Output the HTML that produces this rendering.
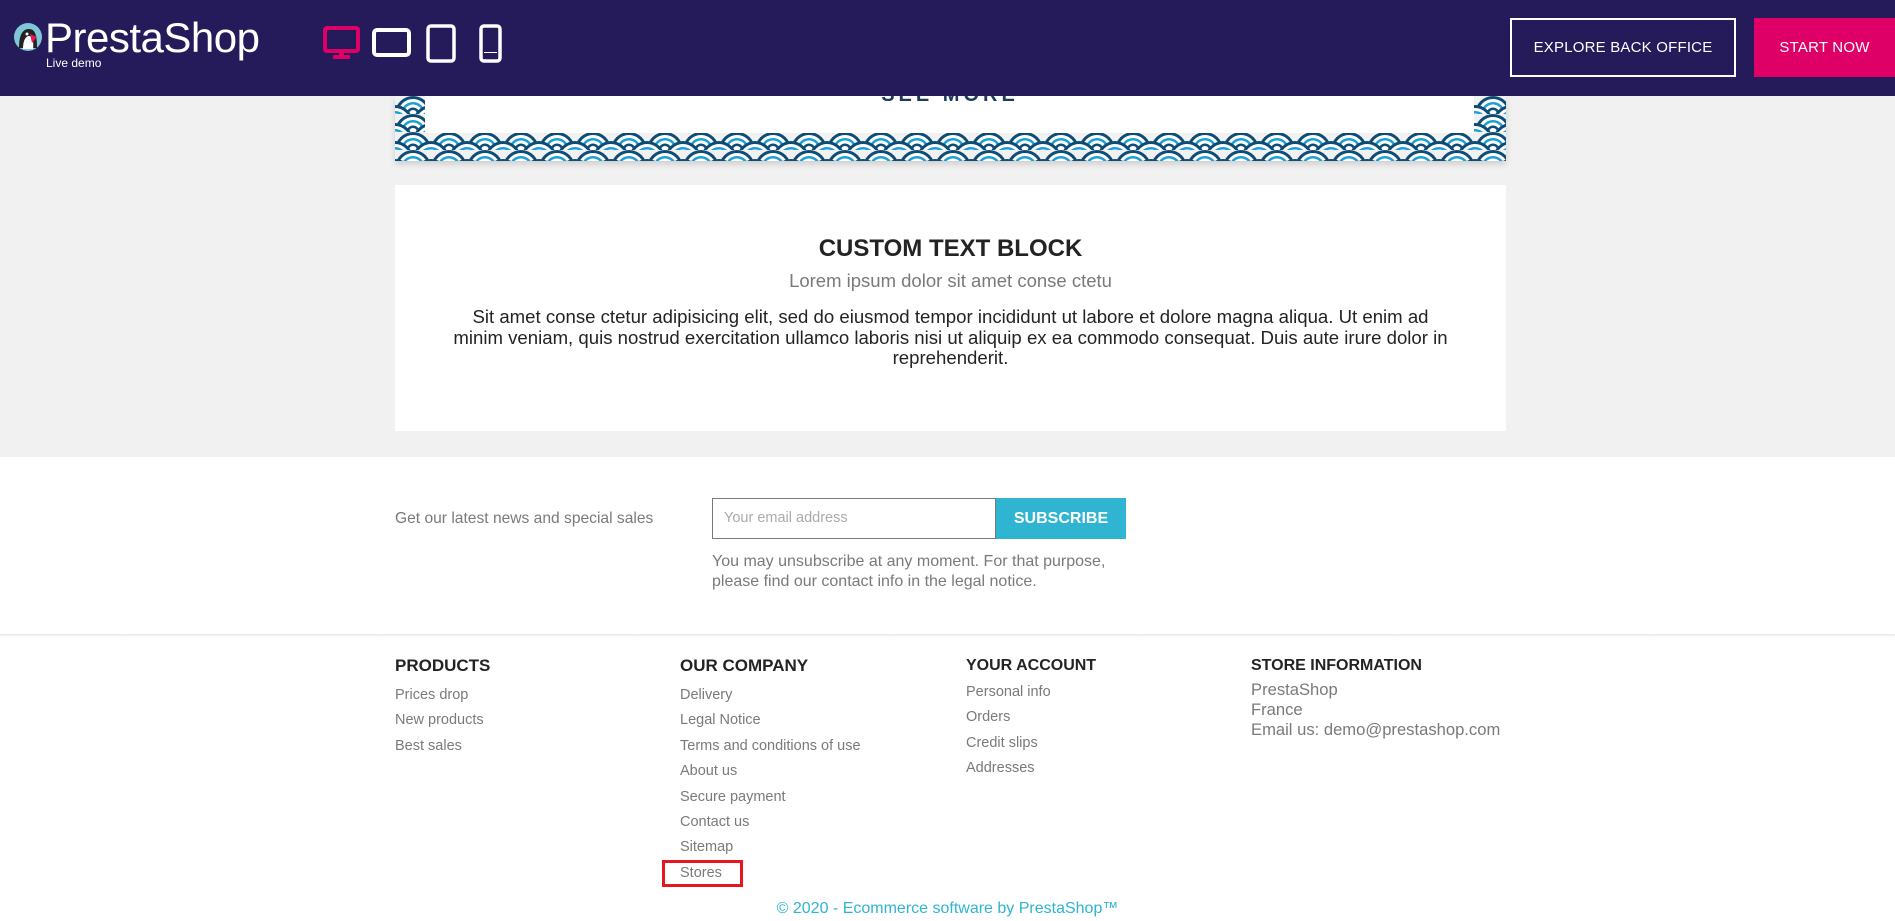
<!DOCTYPE html>
<html><head><meta charset="utf-8">
<style>
*{margin:0;padding:0;box-sizing:border-box}
body{width:1895px;height:921px;overflow:hidden;background:#fff;font-family:"Liberation Sans",sans-serif;position:relative}
.abs{position:absolute}
#grey{left:0;top:0;width:1895px;height:457px;background:#f1f1f1}
#hdr{left:0;top:0;width:1895px;height:96px;background:#251b5b;z-index:5}
.btn{position:absolute;top:18px;height:59px;color:#fff;font-size:15px;display:flex;align-items:center;justify-content:center;letter-spacing:.2px}
#hide{left:0;top:96px;width:86px;height:32px;background:#a39fb8;color:#fff;font-size:13px;display:flex;align-items:center;padding-left:16px;z-index:4}
.col{position:absolute;top:654px}
.col h4{font-size:17px;font-weight:bold;color:#232323;height:24px;line-height:24px}
.col a{display:block;font-size:14.5px;color:#7a7a7a;height:25.4px;line-height:25.4px;text-decoration:none}
</style></head><body>
<div id="grey" class="abs"></div>
<div id="hdr" class="abs">
  <svg class="abs" style="left:13px;top:22px" width="30" height="30" viewBox="0 0 30 30">
    <circle cx="15" cy="15" r="14" fill="#7fc6d8"/>
    <path d="M6 26 C6 12 10 7 16 7 C22 7 24 13 24 26 Z" fill="#222"/>
    <path d="M10 27 C10 18 13 14 16 14 C19 14 21 18 20 27 Z" fill="#fff"/>
    <path d="M17 12 L24 15 L19 21 Z" fill="#e2185a"/>
    <circle cx="14" cy="12" r="1.5" fill="#fff"/>
  </svg>
  <div class="abs" style="left:45px;top:16px;color:#fff;font-size:42px;line-height:44px;letter-spacing:-0.5px">PrestaShop</div>
  <div class="abs" style="left:46px;top:56px;color:#fff;font-size:12px">Live demo</div>
  <svg class="abs" style="left:322px;top:26px" width="40" height="36" viewBox="0 0 40 36">
    <rect x="3" y="2" width="33" height="23" rx="2" fill="none" stroke="#df0067" stroke-width="4"/>
    <rect x="17" y="25" width="5" height="5" fill="#df0067"/><rect x="11" y="29" width="17" height="4" rx="1" fill="#df0067"/>
  </svg>
  <svg class="abs" style="left:372px;top:28px" width="40" height="30" viewBox="0 0 40 30">
    <rect x="2" y="2" width="35" height="25" rx="3" fill="none" stroke="#fff" stroke-width="4"/>
  </svg>
  <svg class="abs" style="left:426px;top:24px" width="31" height="39" viewBox="0 0 31 39">
    <rect x="2" y="2" width="26" height="35" rx="3" fill="none" stroke="#fff" stroke-width="3.5"/>
  </svg>
  <svg class="abs" style="left:479px;top:24px" width="24" height="39" viewBox="0 0 24 39">
    <rect x="2" y="2" width="19" height="35" rx="3" fill="none" stroke="#fff" stroke-width="3.5"/>
    <circle cx="11.5" cy="31" r="2" fill="#251b5b"/><rect x="5" y="28" width="13" height="1" fill="#fff"/>
  </svg>
  <div class="btn" style="left:1510px;width:226px;border:2px solid #fff">EXPLORE BACK OFFICE</div>
  <div class="btn" style="left:1754px;width:141px;background:#df0067">START NOW</div>
</div>
<div id="hide"><span style="font-size:11px;margin-right:10px">&#8963;</span>Hide</div>
<svg class="abs" style="left:395px;top:96px;box-shadow:0 3px 6px rgba(0,0,0,.15)" width="1111" height="65">
  <defs>
    <pattern id="sg" width="36" height="18" patternUnits="userSpaceOnUse">
      <g id="sc">
        <circle cx="18" cy="18" r="18" fill="#0d4c75"/><circle cx="18" cy="18" r="15" fill="#fff"/>
        <circle cx="18" cy="18" r="12" fill="#1a9fd6"/><circle cx="18" cy="18" r="9.5" fill="#fff"/>
        <circle cx="18" cy="18" r="6.5" fill="#0d4c75"/><circle cx="18" cy="18" r="4" fill="#fff"/>
      </g>
      <use href="#sc" x="-18" y="9"/><use href="#sc" x="18" y="9"/>
    </pattern>
  </defs>
  <rect width="1111" height="65" fill="url(#sg)"/>
  <rect x="30" y="0" width="1049" height="37" fill="#fff"/>
  <text x="555" y="5" text-anchor="middle" font-family="Liberation Sans" font-weight="bold" font-size="20" letter-spacing="4" fill="#1c3d5a">SEE MORE</text>
</svg>
<div class="abs" style="left:395px;top:185px;width:1111px;height:246px;background:#fff;text-align:center">
  <div style="position:absolute;top:50px;width:100%;font-size:24px;font-weight:bold;color:#232323">CUSTOM TEXT BLOCK</div>
  <div style="position:absolute;top:85px;width:100%;font-size:18.5px;color:#7a7a7a">Lorem ipsum dolor sit amet conse ctetu</div>
  <div style="position:absolute;top:122px;width:100%;font-size:18.6px;line-height:20.5px;color:#232323">Sit amet conse ctetur adipisicing elit, sed do eiusmod tempor incididunt ut labore et dolore magna aliqua. Ut enim ad<br>minim veniam, quis nostrud exercitation ullamco laboris nisi ut aliquip ex ea commodo consequat. Duis aute irure dolor in<br>reprehenderit.</div>
</div>
<div class="abs" style="left:395px;top:510px;font-size:15.6px;color:#7a7a7a">Get our latest news and special sales</div>
<div class="abs" style="left:712px;top:498px;width:284px;height:41px;border:1px solid #7a7a7a;font-size:14.5px;color:#aaa;padding:11px 11px">Your email address</div>
<div class="abs" style="left:996px;top:498px;width:130px;height:41px;background:#2fb5d2;color:#fff;font-weight:bold;font-size:16px;display:flex;align-items:center;justify-content:center">SUBSCRIBE</div>
<div class="abs" style="left:712px;top:552px;font-size:16px;line-height:19.5px;color:#7a7a7a">You may unsubscribe at any moment. For that purpose,<br>please find our contact info in the legal notice.</div>
<div class="abs" style="left:0;top:634px;width:1895px;height:3px;background:linear-gradient(#e6e6e6,#fff)"></div>
<div class="col" style="left:395px"><h4>PRODUCTS</h4><div style="height:5px"></div><a>Prices drop</a><a>New products</a><a>Best sales</a></div>
<div class="col" style="left:680px"><h4>OUR COMPANY</h4><div style="height:5px"></div><a>Delivery</a><a>Legal Notice</a><a>Terms and conditions of use</a><a>About us</a><a>Secure payment</a><a>Contact us</a><a>Sitemap</a><a>Stores</a></div>
<div class="col" style="left:966px"><h4 style="font-size:16px">YOUR ACCOUNT</h4><div style="height:2px"></div><a>Personal info</a><a>Orders</a><a>Credit slips</a><a>Addresses</a></div>
<div class="col" style="left:1251px"><h4 style="font-size:16px">STORE INFORMATION</h4><div style="font-size:16.6px;line-height:20px;color:#7a7a7a;margin-top:2px">PrestaShop<br>France<br>Email us: demo@prestashop.com</div></div>
<div class="abs" style="left:662px;top:860px;width:81px;height:27px;border:3px solid #e8141f"></div>
<div class="abs" style="left:0;top:900px;width:1895px;text-align:center;font-size:16px;color:#2fb5d2">© 2020 - Ecommerce software by PrestaShop™</div>
</body></html>
